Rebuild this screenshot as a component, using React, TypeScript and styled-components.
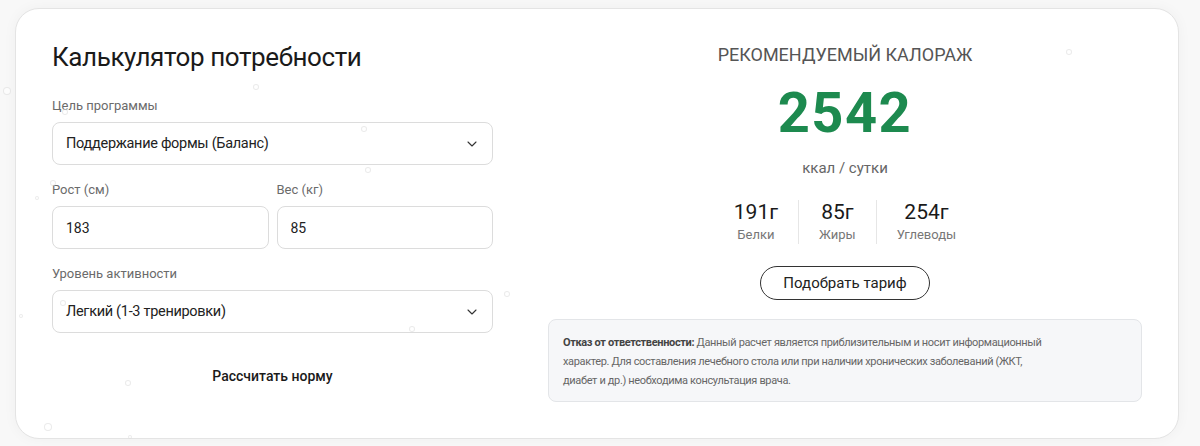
import React from "react";
import styled, { createGlobalStyle } from "styled-components";
import { ChevronDown } from "lucide-react";

const GlobalStyle = createGlobalStyle`
  * { box-sizing: border-box; }
  body {
    margin: 0;
    background: #f8f8f8;
    font-family: Roboto, "Noto Sans", sans-serif;
    color: #1a1a1a;
  }
`;

const dots = [
  { x: 7, y: 91, r: 4 },
  { x: 256, y: 87, r: 3 },
  { x: 364, y: 129, r: 3 },
  { x: 368, y: 170, r: 3 },
  { x: 65, y: 112, r: 3 },
  { x: 53, y: 183, r: 3 },
  { x: 37, y: 198, r: 2 },
  { x: 507, y: 294, r: 3 },
  { x: 412, y: 329, r: 3 },
  { x: 63, y: 303, r: 3 },
  { x: 21, y: 316, r: 2 },
  { x: 128, y: 383, r: 3 },
  { x: 48, y: 427, r: 4 },
  { x: 130, y: 437, r: 2 },
  { x: 1069, y: 52, r: 3 },
];

const App = () => {
  return (
    <Page>
      <GlobalStyle />
      <Card>
        <FormColumn>
          <Title>Калькулятор потребности</Title>
          <Field>
            <Label>Цель программы</Label>
            <SelectBox>
              <span>Поддержание формы (Баланс)</span>
              <ChevronDown size={16} strokeWidth={1.6} color="#333" />
            </SelectBox>
          </Field>
          <FieldRow>
            <Field>
              <Label>Рост (см)</Label>
              <InputBox>183</InputBox>
            </Field>
            <Field>
              <Label>Вес (кг)</Label>
              <InputBox>85</InputBox>
            </Field>
          </FieldRow>
          <Field>
            <Label>Уровень активности</Label>
            <SelectBox>
              <span>Легкий (1-3 тренировки)</span>
              <ChevronDown size={16} strokeWidth={1.6} color="#333" />
            </SelectBox>
          </Field>
          <CalcButton>Рассчитать норму</CalcButton>
        </FormColumn>

        <ResultColumn>
          <ResultHeading>Рекомендуемый калораж</ResultHeading>
          <Calories>2542</Calories>
          <Unit>ккал / сутки</Unit>
          <Macros>
            <Macro>
              <MacroValue>191г</MacroValue>
              <MacroLabel>Белки</MacroLabel>
            </Macro>
            <Macro $divider>
              <MacroValue>85г</MacroValue>
              <MacroLabel>Жиры</MacroLabel>
            </Macro>
            <Macro $divider>
              <MacroValue>254г</MacroValue>
              <MacroLabel>Углеводы</MacroLabel>
            </Macro>
          </Macros>
          <PlanButton>Подобрать тариф</PlanButton>
          <Disclaimer>
            <DisclaimerText>
              <strong>Отказ от ответственности:</strong> Данный расчет является
              приблизительным и носит информационный
              <br />
              характер. Для составления лечебного стола или при наличии
              хронических заболеваний (ЖКТ,
              <br />
              диабет и др.) необходима консультация врача.
            </DisclaimerText>
          </Disclaimer>
        </ResultColumn>
      </Card>
      <Dots>
        {dots.map((d, i) => (
          <Dot
            key={i}
            style={{ left: d.x - d.r, top: d.y - d.r, width: d.r * 2, height: d.r * 2 }}
          />
        ))}
      </Dots>
    </Page>
  );
};

const Page = styled.div`
  position: relative;
  width: 1200px;
  height: 446px;
  padding: 8px 21px 9px 15px;
  overflow: hidden;
`;

const Card = styled.div`
  display: grid;
  grid-template-columns: 441px 1fr;
  column-gap: 55px;
  align-items: start;
  background: #ffffff;
  border: 1px solid #e4e4e4;
  border-radius: 24px;
  box-shadow: 0 0 14px rgba(0, 0, 0, 0.04);
  padding: 32px 36px 36px;
`;

const FormColumn = styled.div`
  display: flex;
  flex-direction: column;
`;

const Title = styled.h1`
  margin: 0 0 24px;
  font-size: 26px;
  line-height: 32px;
  font-weight: 400;
  letter-spacing: -0.4px;
  color: #1a1a1a;
`;

const Field = styled.div`
  display: flex;
  flex-direction: column;
  gap: 7px;
  flex: 1;
  margin-bottom: 16px;
`;

const FieldRow = styled.div`
  display: flex;
  gap: 8px;
`;

const Label = styled.div`
  font-size: 13px;
  line-height: 18px;
  color: #6b6b6b;
`;

const InputBox = styled.div`
  display: flex;
  align-items: center;
  height: 43px;
  padding: 0 13px;
  border: 1px solid #dcdcdc;
  border-radius: 8px;
  font-size: 14px;
  color: #222;
  background: #fff;
`;

const SelectBox = styled(InputBox)`
  justify-content: space-between;
  font-size: 14.5px;
  letter-spacing: -0.3px;
  padding-right: 12px;
`;

const CalcButton = styled.button`
  align-self: stretch;
  height: 44px;
  margin-top: 5px;
  border: none;
  background: transparent;
  font-family: inherit;
  font-size: 14px;
  font-weight: 500;
  color: #1a1a1a;
`;

const ResultColumn = styled.div`
  display: flex;
  flex-direction: column;
  align-items: center;
`;

const ResultHeading = styled.div`
  font-size: 18px;
  line-height: 28px;
  text-transform: uppercase;
  color: #555;
`;

const Calories = styled.div`
  margin-top: 12px;
  font-size: 56px;
  line-height: 64px;
  font-weight: 700;
  color: #1d8a4f;
  letter-spacing: 1.5px;
`;

const Unit = styled.div`
  margin-top: 13px;
  font-size: 15px;
  line-height: 20px;
  color: #666;
`;

const Macros = styled.div`
  display: flex;
  margin-top: 22px;
`;

const Macro = styled.div<{ $divider?: boolean }>`
  display: flex;
  flex-direction: column;
  align-items: center;
  padding: 0 20px;
  border-left: ${({ $divider }) => ($divider ? "1px solid #e6e6e6" : "none")};
`;

const MacroValue = styled.div`
  font-size: 21px;
  line-height: 25px;
  font-weight: 400;
  color: #1a1a1a;
`;

const MacroLabel = styled.div`
  font-size: 13px;
  line-height: 19px;
  color: #777;
`;

const PlanButton = styled.button`
  margin-top: 22px;
  height: 34px;
  padding: 0 22px;
  border: 1px solid #333;
  border-radius: 999px;
  background: #fff;
  font-family: inherit;
  font-size: 15px;
  color: #222;
`;

const Disclaimer = styled.div`
  align-self: stretch;
  margin-top: 19px;
  padding: 13px 14px 11px;
  background: #f6f7f9;
  border: 1px solid #e3e5e8;
  border-radius: 8px;
`;

const DisclaimerText = styled.p`
  margin: 0;
  font-size: 11px;
  line-height: 19px;
  letter-spacing: -0.35px;
  color: #666;
  strong {
    font-weight: 700;
    color: #444;
  }
`;

const Dots = styled.div`
  position: absolute;
  inset: 0;
  pointer-events: none;
`;

const Dot = styled.span`
  position: absolute;
  border: 1px solid rgba(0, 0, 0, 0.08);
  border-radius: 50%;
  background: rgba(255, 255, 255, 0.6);
`;

export default App;
